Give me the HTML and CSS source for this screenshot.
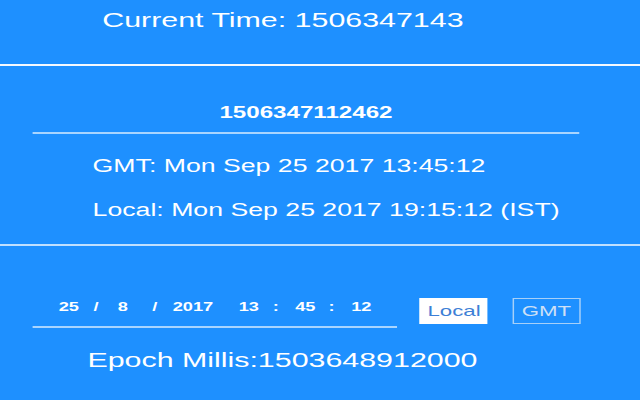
FILE: index.html
```html
<!DOCTYPE html>
<html>
<head>
<meta charset="utf-8">
<link rel="stylesheet" href="styles.css">
</head>
<body>
<div class="page">
  <div class="title">Current Time: 1506347143</div>
  <div class="rule rule-strong"></div>
  <div class="millis-input">1506347112462</div>
  <div class="line line-gmt">GMT: Mon Sep 25 2017 13:45:12</div>
  <div class="line line-local">Local: Mon Sep 25 2017 19:15:12 (IST)</div>
  <div class="rule rule-soft"></div>
  <div class="picker-row">
    <div class="datetime">
      <span class="seg num2 m-day">25</span>
      <span class="seg sep m-sep1">/</span>
      <span class="seg num1 m-month">8</span>
      <span class="seg sep m-sep2">/</span>
      <span class="seg num4 m-year">2017</span>
      <span class="seg num2 m-hour">13</span>
      <span class="seg sep m-col1">:</span>
      <span class="seg num2 m-min">45</span>
      <span class="seg sep m-col2">:</span>
      <span class="seg num2 m-sec">12</span>
    </div>
    <div class="btn btn-active">Local</div>
    <div class="btn btn-outline">GMT</div>
  </div>
  <div class="epoch">Epoch Millis:1503648912000</div>
</div>
</body>
</html>
```

FILE: styles.css
```css
html, body {
  margin: 0;
  padding: 0;
  background: #1e90ff;
  overflow: hidden;
}

body {
  width: 640px;
  height: 400px;
  font-family: "Liberation Sans", Arial, Helvetica, sans-serif;
  color: #ffffff;
}

.page {
  width: 432px;
  height: 400px;
  transform: scaleX(1.48148);
  transform-origin: 0 0;
  display: flex;
  flex-direction: column;
}

.title {
  margin-top: 8px;
  padding-left: 69px;
  font-size: 20.5px;
  line-height: 24px;
  white-space: nowrap;
}

.rule {
  height: 2px;
}

.rule-strong {
  margin-top: 32px;
  background: #f4f9ff;
}

.rule-soft {
  margin-top: 23px;
  background: rgba(255, 255, 255, 0.72);
}

.millis-input {
  margin-top: 35.5px;
  margin-left: 22.3px;
  width: 368.5px;
  padding-bottom: 10.5px;
  border-bottom: 2px solid rgba(255, 255, 255, 0.62);
  text-align: center;
  font-size: 16.3px;
  font-weight: bold;
  line-height: 20px;
}

.line {
  padding-left: 62.5px;
  font-size: 18px;
  line-height: 22px;
  white-space: nowrap;
}

.line-gmt {
  margin-top: 21px;
}

.line-local {
  margin-top: 22px;
}

.picker-row {
  margin-top: 52px;
  margin-left: 22.3px;
  display: flex;
  align-items: flex-start;
}

.datetime {
  width: 245.5px;
  padding-top: 0.5px;
  padding-bottom: 11.5px;
  box-sizing: border-box;
  border-bottom: 2px solid rgba(255, 255, 255, 0.62);
  display: flex;
  font-size: 12.3px;
  font-weight: bold;
  line-height: 16px;
}

.seg {
  display: block;
  text-align: center;
  flex: none;
}

.num1 { width: 10px; }
.num2 { width: 16px; }
.num4 { width: 28px; }
.sep { width: 6px; }

.m-day { margin-left: 16.2px; }
.m-sep1 { margin-left: 7.3px; }
.m-month { margin-left: 10.2px; }
.m-sep2 { margin-left: 13.6px; }
.m-year { margin-left: 8.7px; }
.m-hour { margin-left: 15.7px; }
.m-col1 { margin-left: 7.3px; }
.m-min { margin-left: 8.9px; }
.m-col2 { margin-left: 6.7px; }
.m-sec { margin-left: 9.1px; }

.btn {
  box-sizing: border-box;
  width: 46px;
  height: 25.5px;
  font-size: 15px;
  line-height: 25.5px;
  text-align: center;
  white-space: nowrap;
}

.btn-active {
  margin-left: 15.7px;
  background: #ffffff;
  color: #3d7fd6;
}

.btn-outline {
  margin-left: 16.4px;
  border: 1px solid rgba(225, 235, 245, 0.7);
  line-height: 23.5px;
  color: rgba(230, 236, 244, 0.88);
}

.epoch {
  margin-top: 19.8px;
  padding-left: 59px;
  font-size: 20.5px;
  line-height: 24px;
  white-space: nowrap;
}
```
